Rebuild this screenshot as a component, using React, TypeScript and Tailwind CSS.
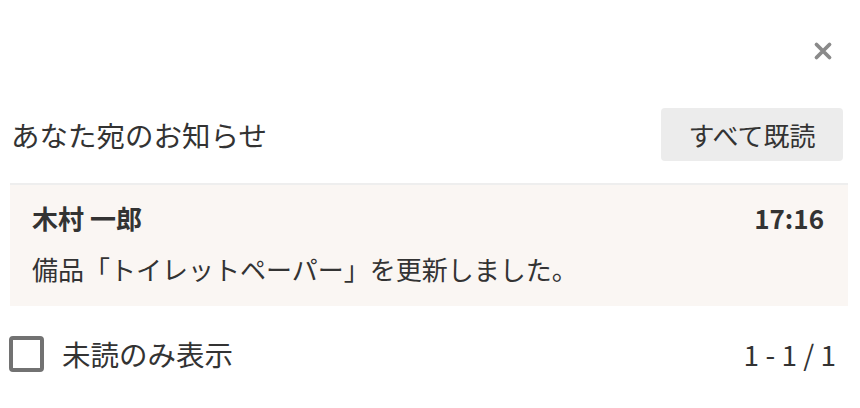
import React from "react";

export default function App() {
  const font = { fontFamily: '"Noto Sans CJK JP", "Noto Sans", sans-serif' };
  return (
    <div className="w-[860px] h-[408px] bg-white text-[#333333]" style={font}>
      <div className="h-[100px] flex justify-end items-start pt-[41px] pr-[27px]">
        <svg width="20" height="20" viewBox="0 0 20 20">
          <path d="M3.5 3.5 L16.5 16.5 M16.5 3.5 L3.5 16.5" stroke="#8a8a8a" strokeWidth="3.8" strokeLinecap="round" />
        </svg>
      </div>
      <div className="mt-[8px] flex items-center justify-between pl-[11px] pr-[17px]">
        <div className="text-[28.5px] leading-[40px]">あなた宛のお知らせ</div>
        <button className="h-[53px] w-[182px] rounded-[4px] bg-[#ececec] text-[26px] text-[#333333]">
          すべて既読
        </button>
      </div>
      <div className="mt-[22px] mx-[10px] mr-[12px] border-t-2 border-[#eeeeee] bg-[#faf6f3] h-[123px] px-[22px] pr-[24px] pt-[15px]">
        <div className="flex justify-between items-center">
          <div className="text-[26px] leading-[36px] font-bold">木村 一郎</div>
          <div className="text-[26px] leading-[36px] font-bold">17:16</div>
        </div>
        <div className="mt-[15px] text-[26px] leading-[36px]">備品「トイレットペーパー」を更新しました。</div>
      </div>
      <div className="mt-[28px] flex items-center justify-between pl-[9px] pr-[24px]">
        <div className="flex items-center gap-[18px]">
          <div className="w-[35px] h-[36px] rounded-[4px] border-[4px] border-[#727272]" />
          <div className="text-[28.5px] leading-[40px]">未読のみ表示</div>
        </div>
        <div className="text-[28px] leading-[40px]">1 - 1 / 1</div>
      </div>
    </div>
  );
}
